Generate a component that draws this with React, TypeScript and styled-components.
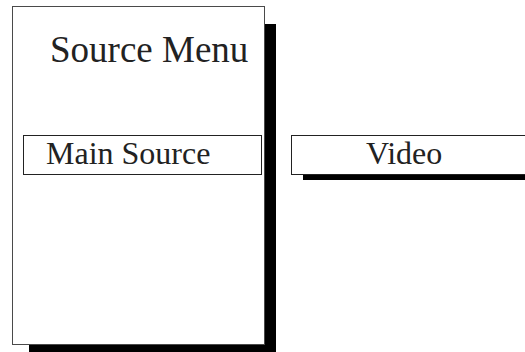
import styled, { createGlobalStyle } from "styled-components";

const GlobalStyle = createGlobalStyle`
  html, body {
    margin: 0;
    padding: 0;
    background: #ffffff;
    overflow: hidden;
  }
  body {
    font-family: "Liberation Serif", "Times New Roman", serif;
    color: #222222;
  }
`;

const App = () => {
  return (
    <>
      <GlobalStyle />
      <Screen>
        <MenuPanel>
          <MenuTitle>Source Menu</MenuTitle>
          <MenuItem>Main Source</MenuItem>
        </MenuPanel>
        <ValueBox>Video</ValueBox>
      </Screen>
    </>
  );
};

const Screen = styled.div`
  display: flex;
  align-items: flex-start;
  gap: 26px;
  padding: 6px 0 0 12px;
  width: 525px;
  height: 352px;
  box-sizing: border-box;
`;

const MenuPanel = styled.div`
  display: flex;
  flex-direction: column;
  flex-shrink: 0;
  width: 253px;
  height: 339px;
  box-sizing: border-box;
  padding: 24px 3px 0 10px;
  border: 1px solid #4a4a4a;
  background: #ffffff;
  box-shadow: 14px 15px 0 -3px #000000;
`;

const MenuTitle = styled.div`
  font-size: 37px;
  line-height: 1;
  padding-left: 27px;
  margin-bottom: 67px;
`;

const MenuItem = styled.div`
  width: 239px;
  height: 40px;
  box-sizing: border-box;
  border: 1px solid #222222;
  padding: 0 0 4px 22px;
  font-size: 32px;
  line-height: 34px;
`;

const ValueBox = styled.div`
  flex-shrink: 0;
  margin-top: 129px;
  width: 260px;
  height: 40px;
  box-sizing: border-box;
  border: 1px solid #222222;
  padding: 0 0 4px 74px;
  font-size: 32px;
  line-height: 34px;
  background: #ffffff;
  box-shadow: 12px 5px 0 #000000;
`;

export default App;
